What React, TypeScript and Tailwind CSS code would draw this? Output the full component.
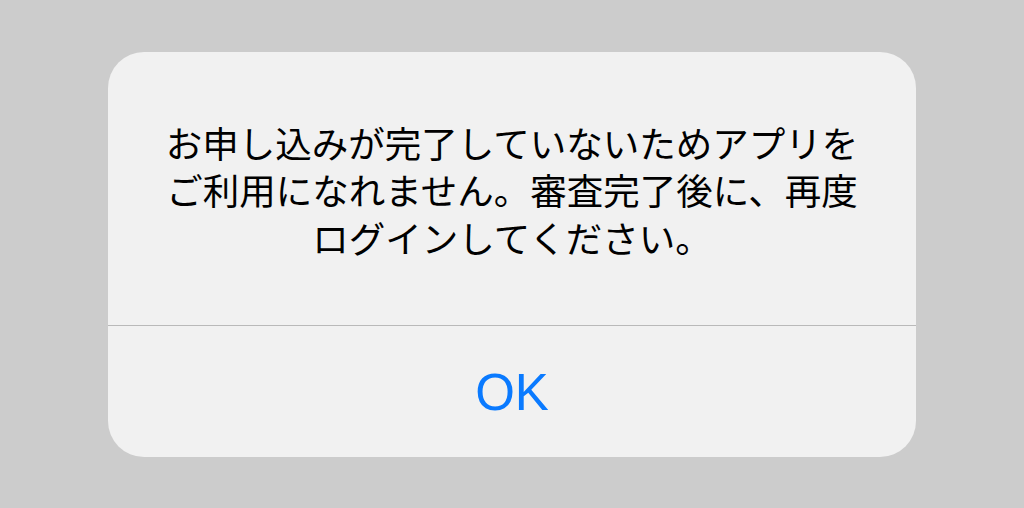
import React from 'react';

const lines: string[] = [
  'お申し込みが完了していないためアプリを',
  'ご利用になれません。審査完了後に、再度',
  'ログインしてください。',
];

const App: React.FC = () => {
  return (
    <div className="w-[1024px] h-[508px] bg-[#cccccc] flex items-start justify-center pt-[52px]">
      <div className="w-[808px] h-[405px] bg-[#f1f1f1] rounded-[36px] flex flex-col overflow-hidden">
        {/* Message */}
        <div className="h-[273px] flex items-center justify-center pt-[3px]">
          <p
            className="text-center whitespace-nowrap text-black text-[36.5px] leading-[47.5px]"
            style={{ fontFamily: '"Noto Sans CJK JP", "Noto Sans", sans-serif' }}
          >
            {lines.map((line, i) => (
              <React.Fragment key={line}>
                {line}
                {i < lines.length - 1 && <br />}
              </React.Fragment>
            ))}
          </p>
        </div>

        <div className="h-px bg-[#b9b9b9]" />

        {/* Action */}
        <button
          className="flex-1 flex items-center justify-center text-[#0a7aff] text-[51px] pt-[3px]"
          style={{ fontFamily: '"Liberation Sans", Arial, sans-serif' }}
        >
          OK
        </button>
      </div>
    </div>
  );
};

export default App;
